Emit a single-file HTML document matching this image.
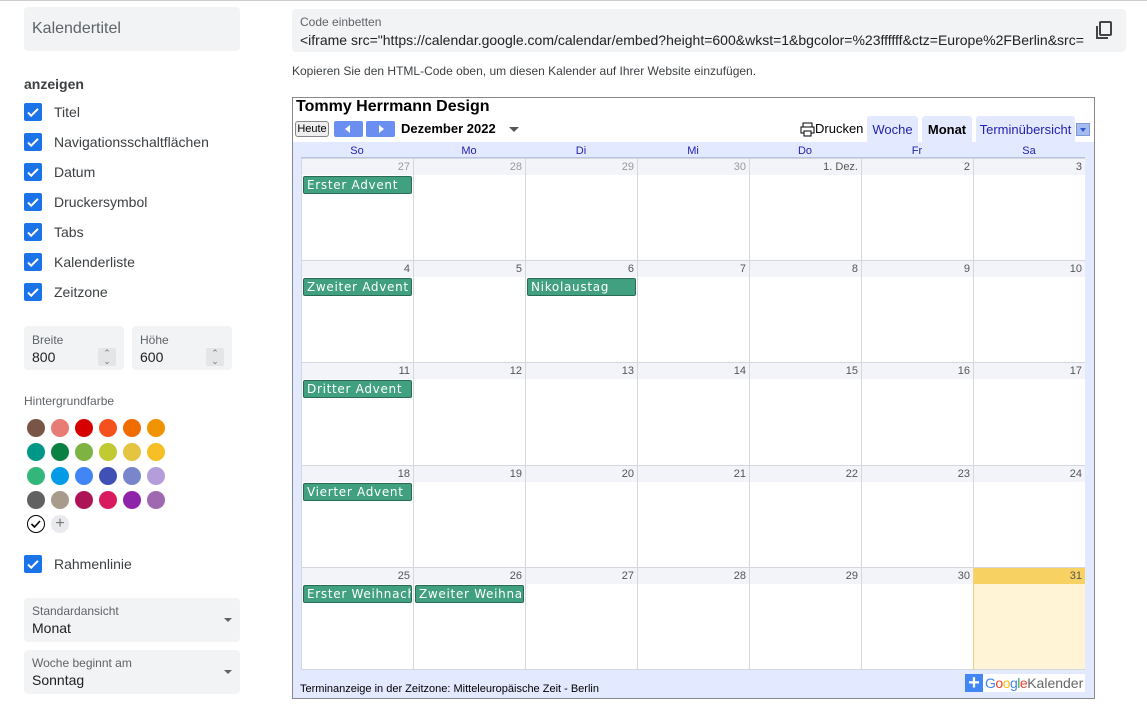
<!DOCTYPE html>
<html><head><meta charset="utf-8"><style>
*{box-sizing:border-box;margin:0;padding:0}
body{width:1147px;height:705px;background:#fff;font-family:"Liberation Sans",Arial,sans-serif;position:relative;overflow:hidden;color:#202124}
.a{position:absolute}
.box{background:#f1f3f4;border-radius:4px}
.cb{position:absolute;left:24px;width:18px;height:18px;background:#1a73e8;border-radius:2px}
.cb svg{position:absolute;left:2px;top:2px}
.cbl{position:absolute;left:54px;font-size:14px;color:#3c4043}
.dot{position:absolute;width:18px;height:18px;border-radius:50%}
.cell{position:absolute;width:112px;height:102px;border-left:1px solid #d4d7de;border-top:1px solid #d4d7de;background:#fff}
.cell .n{height:16px;background:#f2f4fa;text-align:right;padding-right:3px;font-size:11px;color:#555;line-height:16px}
.cell .g{color:#999}
.ev{position:absolute;left:1px;top:17px;width:109px;height:18px;background:#41a07f;border:1px solid #2a6b53;border-radius:2px;color:#fff;font-family:"DejaVu Sans",sans-serif;font-size:12px;letter-spacing:0.7px;line-height:16px;padding-left:3px;white-space:nowrap;overflow:hidden}
.dh{position:absolute;top:145px;width:112px;text-align:center;font-size:11px;color:#2323b0;line-height:13px}
</style></head><body>
<div class="a" style="left:0;top:0;width:1147px;height:1px;background:#ccc"></div>
<div class="a box" style="left:24px;top:7px;width:216px;height:44px"></div>
<div class="a" style="left:32px;top:20px;font-size:16px;color:#5f6368">Kalendertitel</div>
<div class="a" style="left:24px;top:76px;font-size:14px;font-weight:bold;color:#3c4043">anzeigen</div>
<div class="cb" style="top:103px"><svg width="14" height="14"><path d="M2 7.5l3.2 3.2L12 3.8" stroke="#fff" stroke-width="2" fill="none"/></svg></div><div class="cbl" style="top:104px">Titel</div>
<div class="cb" style="top:133px"><svg width="14" height="14"><path d="M2 7.5l3.2 3.2L12 3.8" stroke="#fff" stroke-width="2" fill="none"/></svg></div><div class="cbl" style="top:134px">Navigationsschaltflächen</div>
<div class="cb" style="top:163px"><svg width="14" height="14"><path d="M2 7.5l3.2 3.2L12 3.8" stroke="#fff" stroke-width="2" fill="none"/></svg></div><div class="cbl" style="top:164px">Datum</div>
<div class="cb" style="top:193px"><svg width="14" height="14"><path d="M2 7.5l3.2 3.2L12 3.8" stroke="#fff" stroke-width="2" fill="none"/></svg></div><div class="cbl" style="top:194px">Druckersymbol</div>
<div class="cb" style="top:223px"><svg width="14" height="14"><path d="M2 7.5l3.2 3.2L12 3.8" stroke="#fff" stroke-width="2" fill="none"/></svg></div><div class="cbl" style="top:224px">Tabs</div>
<div class="cb" style="top:253px"><svg width="14" height="14"><path d="M2 7.5l3.2 3.2L12 3.8" stroke="#fff" stroke-width="2" fill="none"/></svg></div><div class="cbl" style="top:254px">Kalenderliste</div>
<div class="cb" style="top:283px"><svg width="14" height="14"><path d="M2 7.5l3.2 3.2L12 3.8" stroke="#fff" stroke-width="2" fill="none"/></svg></div><div class="cbl" style="top:284px">Zeitzone</div>
<div class="a box" style="left:24px;top:326px;width:100px;height:44px"></div>
<div class="a" style="left:32px;top:333px;font-size:12px;color:#5f6368">Breite</div>
<div class="a" style="left:32px;top:349px;font-size:14px">800</div>
<div class="a" style="left:98px;top:348px;width:18px;height:18px;background:#e4e5e7;border-radius:2px;color:#777;font-size:9px;text-align:center;line-height:8px;padding-top:1px">&#8963;<br>&#8964;</div>
<div class="a box" style="left:132px;top:326px;width:100px;height:44px"></div>
<div class="a" style="left:140px;top:333px;font-size:12px;color:#5f6368">Höhe</div>
<div class="a" style="left:140px;top:349px;font-size:14px">600</div>
<div class="a" style="left:206px;top:348px;width:18px;height:18px;background:#e4e5e7;border-radius:2px;color:#777;font-size:9px;text-align:center;line-height:8px;padding-top:1px">&#8963;<br>&#8964;</div>
<div class="a" style="left:24px;top:394px;font-size:12px;color:#5f6368">Hintergrundfarbe</div>
<div class="dot" style="left:27px;top:419px;background:#795548"></div><div class="dot" style="left:51px;top:419px;background:#e67c73"></div><div class="dot" style="left:75px;top:419px;background:#d50000"></div><div class="dot" style="left:99px;top:419px;background:#f4511e"></div><div class="dot" style="left:123px;top:419px;background:#ef6c00"></div><div class="dot" style="left:147px;top:419px;background:#f09300"></div>
<div class="dot" style="left:27px;top:443px;background:#009688"></div><div class="dot" style="left:51px;top:443px;background:#0b8043"></div><div class="dot" style="left:75px;top:443px;background:#7cb342"></div><div class="dot" style="left:99px;top:443px;background:#c0ca33"></div><div class="dot" style="left:123px;top:443px;background:#e4c441"></div><div class="dot" style="left:147px;top:443px;background:#f6bf26"></div>
<div class="dot" style="left:27px;top:467px;background:#33b679"></div><div class="dot" style="left:51px;top:467px;background:#039be5"></div><div class="dot" style="left:75px;top:467px;background:#4285f4"></div><div class="dot" style="left:99px;top:467px;background:#3f51b5"></div><div class="dot" style="left:123px;top:467px;background:#7986cb"></div><div class="dot" style="left:147px;top:467px;background:#b39ddb"></div>
<div class="dot" style="left:27px;top:491px;background:#616161"></div><div class="dot" style="left:51px;top:491px;background:#a79b8e"></div><div class="dot" style="left:75px;top:491px;background:#ad1457"></div><div class="dot" style="left:99px;top:491px;background:#d81b60"></div><div class="dot" style="left:123px;top:491px;background:#8e24aa"></div><div class="dot" style="left:147px;top:491px;background:#9e69af"></div>
<div class="dot" style="left:27px;top:515px;border:1.5px solid #000;background:#fff"><svg width="16" height="16" style="position:absolute;left:0;top:0"><path d="M3.5 8l3 3L12 5" stroke="#000" stroke-width="1.6" fill="none"/></svg></div>
<div class="dot" style="left:51px;top:515px;background:#e8eaed;color:#777;text-align:center;line-height:18px;font-size:16px">+</div>
<div class="cb" style="top:555px"><svg width="14" height="14"><path d="M2 7.5l3.2 3.2L12 3.8" stroke="#fff" stroke-width="2" fill="none"/></svg></div><div class="cbl" style="top:556px">Rahmenlinie</div>
<div class="a box" style="left:24px;top:598px;width:216px;height:44px"></div>
<div class="a" style="left:32px;top:604px;font-size:12px;color:#5f6368">Standardansicht</div>
<div class="a" style="left:32px;top:620px;font-size:14px">Monat</div>
<div class="a" style="left:224px;top:618px;border-left:4px solid transparent;border-right:4px solid transparent;border-top:4px solid #5f6368"></div>
<div class="a box" style="left:24px;top:650px;width:216px;height:44px"></div>
<div class="a" style="left:32px;top:656px;font-size:12px;color:#5f6368">Woche beginnt am</div>
<div class="a" style="left:32px;top:672px;font-size:14px">Sonntag</div>
<div class="a" style="left:224px;top:670px;border-left:4px solid transparent;border-right:4px solid transparent;border-top:4px solid #5f6368"></div>

<div class="a box" style="left:292px;top:9px;width:834px;height:43px"></div>
<div class="a" style="left:300px;top:15px;font-size:12px;color:#5f6368">Code einbetten</div>
<div class="a" style="left:300px;top:32px;width:786px;font-size:14px;white-space:nowrap;overflow:hidden">&lt;iframe src="https://calendar.google.com/calendar/embed?height=600&amp;wkst=1&amp;bgcolor=%23ffffff&amp;ctz=Europe%2FBerlin&amp;src=</div>
<svg class="a" style="left:1094px;top:20px" width="20" height="22"><rect x="6" y="2" width="11" height="13" stroke="#444" stroke-width="2" fill="none" rx="1"/><path d="M3 6v12h11" stroke="#444" stroke-width="2" fill="none"/></svg>
<div class="a" style="left:292px;top:64px;font-size:12px;color:#3c4043">Kopieren Sie den HTML-Code oben, um diesen Kalender auf Ihrer Website einzufügen.</div>

<div class="a" style="left:292px;top:97px;width:803px;height:602px;border:1px solid #888;background:#e3e9ff"></div>
<div class="a" style="left:293px;top:98px;width:801px;height:44px;background:#fff"></div>
<div class="a" style="left:296px;top:98px;font-size:16px;font-weight:bold;color:#000">Tommy Herrmann Design</div>
<div class="a" style="left:295px;top:121px;width:34px;height:16px;border:1px solid #888;border-radius:3px;background:#eee;font-size:11px;line-height:14px;text-align:center;color:#000">Heute</div>
<div class="a" style="left:334px;top:121px;width:29px;height:16px;background:#6a8ff0;border-radius:2px"><div class="a" style="left:11px;top:4px;border-top:4px solid transparent;border-bottom:4px solid transparent;border-right:5px solid #fff"></div></div>
<div class="a" style="left:366px;top:121px;width:29px;height:16px;background:#6a8ff0;border-radius:2px"><div class="a" style="left:13px;top:4px;border-top:4px solid transparent;border-bottom:4px solid transparent;border-left:5px solid #fff"></div></div>
<div class="a" style="left:401px;top:121px;font-size:13px;font-weight:bold;color:#000">Dezember 2022</div>
<div class="a" style="left:509px;top:127px;border-left:5px solid transparent;border-right:5px solid transparent;border-top:5px solid #555"></div>
<svg class="a" style="left:800px;top:122px" width="15" height="15"><rect x="3" y="1" width="9" height="4" fill="none" stroke="#000"/><rect x="1" y="5" width="13" height="6" fill="none" stroke="#000"/><rect x="4" y="9" width="7" height="5" fill="#fff" stroke="#000"/></svg>
<div class="a" style="left:815px;top:121px;font-size:13px;color:#000">Drucken</div>
<div class="a" style="left:867px;top:116px;width:51px;height:26px;background:#e3e9ff;border-radius:3px 3px 0 0;font-size:13px;color:#2323b0;text-align:center;line-height:28px">Woche</div>
<div class="a" style="left:922px;top:116px;width:50px;height:26px;background:#e3e9ff;border-radius:3px 3px 0 0;font-size:13px;font-weight:bold;color:#000;text-align:center;line-height:28px">Monat</div>
<div class="a" style="left:976px;top:116px;width:99px;height:26px;background:#e3e9ff;border-radius:3px 3px 0 0;font-size:13px;color:#2323b0;text-align:center;line-height:28px">Terminübersicht</div>
<div class="a" style="left:1076px;top:123px;width:14px;height:13px;background:#a6bbef;border:1px solid #7f98d9"><div class="a" style="left:3px;top:4px;border-left:3px solid transparent;border-right:3px solid transparent;border-top:4px solid #2b59c9"></div></div>
<div class="a" style="left:301px;top:157px;width:784px;height:1px;background:#b9c3e8"></div>
<div class="dh" style="left:301px">So</div><div class="dh" style="left:413px">Mo</div><div class="dh" style="left:525px">Di</div><div class="dh" style="left:637px">Mi</div><div class="dh" style="left:749px">Do</div><div class="dh" style="left:861px">Fr</div><div class="dh" style="left:973px">Sa</div>

<div class="cell" style="left:301px;top:158px"><div class="n g">27</div><div class="ev">Erster Advent</div></div>
<div class="cell" style="left:413px;top:158px"><div class="n g">28</div></div>
<div class="cell" style="left:525px;top:158px"><div class="n g">29</div></div>
<div class="cell" style="left:637px;top:158px"><div class="n g">30</div></div>
<div class="cell" style="left:749px;top:158px"><div class="n">1. Dez.</div></div>
<div class="cell" style="left:861px;top:158px"><div class="n">2</div></div>
<div class="cell" style="left:973px;top:158px"><div class="n">3</div></div>

<div class="cell" style="left:301px;top:260px"><div class="n">4</div><div class="ev">Zweiter Advent</div></div>
<div class="cell" style="left:413px;top:260px"><div class="n">5</div></div>
<div class="cell" style="left:525px;top:260px"><div class="n">6</div><div class="ev">Nikolaustag</div></div>
<div class="cell" style="left:637px;top:260px"><div class="n">7</div></div>
<div class="cell" style="left:749px;top:260px"><div class="n">8</div></div>
<div class="cell" style="left:861px;top:260px"><div class="n">9</div></div>
<div class="cell" style="left:973px;top:260px"><div class="n">10</div></div>

<div class="cell" style="left:301px;top:362px;height:103px"><div class="n">11</div><div class="ev">Dritter Advent</div></div>
<div class="cell" style="left:413px;top:362px;height:103px"><div class="n">12</div></div>
<div class="cell" style="left:525px;top:362px;height:103px"><div class="n">13</div></div>
<div class="cell" style="left:637px;top:362px;height:103px"><div class="n">14</div></div>
<div class="cell" style="left:749px;top:362px;height:103px"><div class="n">15</div></div>
<div class="cell" style="left:861px;top:362px;height:103px"><div class="n">16</div></div>
<div class="cell" style="left:973px;top:362px;height:103px"><div class="n">17</div></div>

<div class="cell" style="left:301px;top:465px"><div class="n">18</div><div class="ev">Vierter Advent</div></div>
<div class="cell" style="left:413px;top:465px"><div class="n">19</div></div>
<div class="cell" style="left:525px;top:465px"><div class="n">20</div></div>
<div class="cell" style="left:637px;top:465px"><div class="n">21</div></div>
<div class="cell" style="left:749px;top:465px"><div class="n">22</div></div>
<div class="cell" style="left:861px;top:465px"><div class="n">23</div></div>
<div class="cell" style="left:973px;top:465px"><div class="n">24</div></div>

<div class="cell" style="left:301px;top:567px;border-bottom:1px solid #d4d7de;height:103px"><div class="n">25</div><div class="ev">Erster Weihnachtsfeiertag</div></div>
<div class="cell" style="left:413px;top:567px;border-bottom:1px solid #d4d7de;height:103px"><div class="n">26</div><div class="ev">Zweiter Weihnachtsfeiertag</div></div>
<div class="cell" style="left:525px;top:567px;border-bottom:1px solid #d4d7de;height:103px"><div class="n">27</div></div>
<div class="cell" style="left:637px;top:567px;border-bottom:1px solid #d4d7de;height:103px"><div class="n">28</div></div>
<div class="cell" style="left:749px;top:567px;border-bottom:1px solid #d4d7de;height:103px"><div class="n">29</div></div>
<div class="cell" style="left:861px;top:567px;border-bottom:1px solid #d4d7de;height:103px"><div class="n">30</div></div>
<div class="cell" style="left:973px;top:567px;border-bottom:1px solid #d4d7de;height:103px;background:#fff5d6;border-left-color:#f0d27a"><div class="n" style="background:#f8d163;color:#555">31</div></div>

<div class="a" style="left:300px;top:683px;font-size:11px;color:#000">Terminanzeige in der Zeitzone: Mitteleuropäische Zeit - Berlin</div>
<div class="a" style="left:965px;top:674px;width:120px;height:18px;background:#fff"></div>
<div class="a" style="left:965px;top:674px;width:18px;height:18px;background:#4285f4;color:#fff;font-size:20px;font-weight:bold;line-height:18px;text-align:center">+</div>
<div class="a" style="left:985px;top:675px;font-size:14px;letter-spacing:-0.5px"><span style="color:#4285f4">G</span><span style="color:#ea4335">o</span><span style="color:#fbbc05">o</span><span style="color:#4285f4">g</span><span style="color:#34a853">l</span><span style="color:#ea4335">e</span><span style="color:#666;letter-spacing:0">Kalender</span></div>
</body></html>
